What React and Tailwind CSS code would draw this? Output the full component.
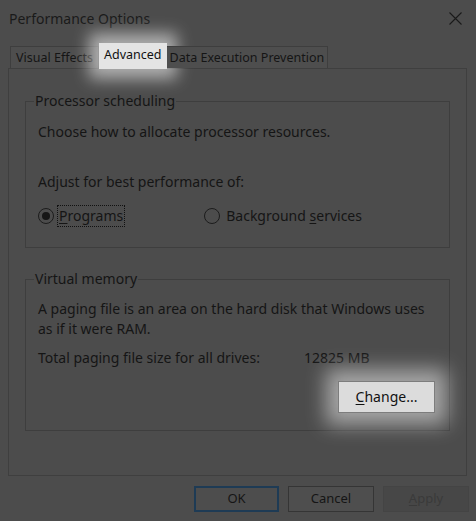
import React from "react";

const font = { fontFamily: '"Noto Sans", "Open Sans", sans-serif' };

function Radio({ checked, children }) {
  return (
    <div className="flex items-center gap-[4px]">
      <span className="w-[16px] h-[16px] rounded-full border border-[#1c1c1c] flex items-center justify-center">
        {checked && <span className="w-[8px] h-[8px] rounded-full bg-[#161616]" />}
      </span>
      {children}
    </div>
  );
}

export default function App() {
  return (
    <div
      className="w-[476px] h-[521px] bg-[#4c4c4c] text-[#151515] flex flex-col overflow-hidden"
      style={font}
    >
      {/* Title bar */}
      <div className="h-[40px] flex items-center justify-between pl-[9px] pr-[14px] pb-[4px]">
        <span className="text-[14px] text-[#1a1a1a]">Performance Options</span>
        <svg width="13" height="13" viewBox="0 0 13 13" className="mt-[1px]">
          <path d="M0.5 0.5 L12.5 12.5 M12.5 0.5 L0.5 12.5" stroke="#1a1a1a" strokeWidth="1.1" fill="none" />
        </svg>
      </div>

      {/* Tabs */}
      <div className="h-[28px] flex items-end pl-[10px] relative z-10">
        <div className="h-[22px] px-[5px] pt-[2px] flex items-center border border-b-0 border-[#3e3e3e] bg-[#4e4e4e] text-[12.5px] whitespace-nowrap">
          Visual Effects
        </div>
        <div className="h-[26px] mb-[-1px] px-[5px] flex items-start pt-[3px] bg-[#e4e4e4] text-[12.5px] text-[#111] whitespace-nowrap shadow-[0_0_16px_10px_rgba(255,255,255,0.55)]">
          Advanced
        </div>
        <div className="h-[22px] px-[3px] pt-[2px] flex items-center border border-b-0 border-l-0 border-[#3e3e3e] bg-[#4e4e4e] text-[12.5px] whitespace-nowrap">
          Data Execution Prevention
        </div>
      </div>

      {/* Panel */}
      <div className="mx-[8px] w-[459px] h-[408px] border border-[#3f3f3f] bg-[#4c4c4c] px-[16px] pt-[22px] flex flex-col">
        <fieldset className="border border-[#3e3e3e] px-[8px] pb-[22px] h-[157px]">
          <legend className="text-[14px] px-[1px] leading-[20px]">Processor scheduling</legend>
          <div className="ml-[4px] flex flex-col text-[14px] leading-[20px] whitespace-nowrap">
            <div className="mt-[11px]">Choose how to allocate processor resources.</div>
            <div className="mt-[30px]">Adjust for best performance of:</div>
            <div className="mt-[14px] flex items-center">
              <Radio checked>
                <span className="outline outline-1 outline-dotted outline-[#111] px-[1px]">
                  <span className="underline underline-offset-2">P</span>rograms
                </span>
              </Radio>
              <div className="ml-[80px]">
                <Radio>
                  <span className="ml-[2px]">
                    Background <span className="underline underline-offset-2">s</span>ervices
                  </span>
                </Radio>
              </div>
            </div>
          </div>
        </fieldset>

        <fieldset className="mt-[21px] border border-[#3e3e3e] px-[8px] h-[162px]">
          <legend className="text-[14px] px-[1px] leading-[20px]">Virtual memory</legend>
          <div className="ml-[4px] flex flex-col text-[14px] leading-[20px] whitespace-nowrap">
            <div className="mt-[10px]">
              A paging file is an area on the hard disk that Windows uses
              <br />
              as if it were RAM.
            </div>
            <div className="mt-[9px] flex">
              <span className="w-[266px]">Total paging file size for all drives:</span>
              <span>12825 MB</span>
            </div>
            <div className="mt-[13px] flex justify-end pr-[6px]">
              <div className="w-[97px] h-[32px] border border-[#7d7d7d] bg-[#dcdcdc] flex items-center justify-center text-[14px] text-[#111] shadow-[0_0_20px_12px_rgba(255,255,255,0.5)]">
                <span>
                  <span className="underline underline-offset-2">C</span>hange...
                </span>
              </div>
            </div>
          </div>
        </fieldset>
      </div>

      {/* Buttons */}
      <div className="mt-[10px] flex justify-end gap-[9px] pr-[7px]">
        <div className="w-[85px] h-[26px] border-2 border-[#1e3b55] bg-[#4d4d4d] flex items-center justify-center text-[13px]">
          OK
        </div>
        <div className="w-[86px] h-[26px] border border-[#353535] bg-[#4e4e4e] flex items-center justify-center text-[13px]">
          Cancel
        </div>
        <div className="w-[86px] h-[26px] border border-[#444] bg-[#474747] flex items-center justify-center text-[13px] text-[#3a3a3a]">
          <span>
            <span className="underline underline-offset-2">A</span>pply
          </span>
        </div>
      </div>
    </div>
  );
}
